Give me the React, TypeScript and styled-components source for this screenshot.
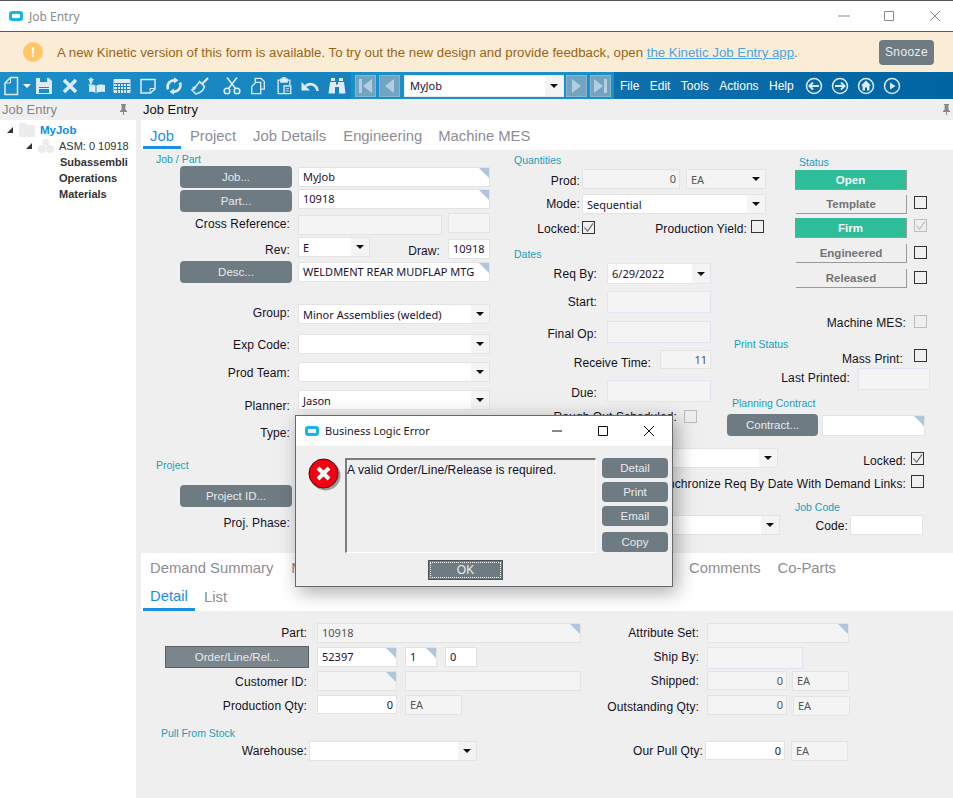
import React from "react";
import styled, { createGlobalStyle, css } from "styled-components";

const GlobalStyle = createGlobalStyle`
  html, body { margin: 0; padding: 0; background: #efefef; }
  * { box-sizing: border-box; }
`;

const UI = `"Liberation Sans", Arial, sans-serif`;
const VALUE = `"Noto Sans", "Open Sans", sans-serif`;
const SLATE = "#6f7b82";
const ICON = "#dcebf5";

type Place = { $mt?: number; $ml?: number };
const place = css<Place>`
  margin-top: ${(p) => p.$mt ?? 0}px;
  margin-left: ${(p) => p.$ml ?? 0}px;
`;

const Window = styled.div`
  width: 953px;
  height: 798px;
  display: flex;
  flex-direction: column;
  position: relative;
  overflow: hidden;
  background: #efefef;
  font-family: ${UI};
`;

const TitleBar = styled.header`
  height: 32px;
  flex: none;
  display: flex;
  align-items: center;
  padding-left: 9px;
  background: #fff;
  border-top: 1px solid #55565c;
  border-bottom: 1px solid #1b6fa8;
`;

const AppGlyph = styled.span`
  width: 14px;
  height: 10px;
  flex: none;
  display: flex;
  align-items: center;
  justify-content: center;
  background: #1ab6ea;
  border-radius: 3px;
  &::after {
    content: "";
    width: 8px;
    height: 4px;
    background: #fff;
    border-radius: 1px;
  }
`;

const AppTitle = styled.span`
  margin-left: 6px;
  font: 12px ${VALUE};
  color: #8b8b8b;
`;

const WinControls = styled.div`
  margin-left: auto;
  display: flex;
  align-items: center;
`;

const WinButton = styled.svg<{ $ml: number }>`
  width: 12px;
  height: 12px;
  margin-left: ${(p) => p.$ml}px;
  fill: none;
  stroke: currentColor;
  stroke-width: 1;
`;

const GreyControls = styled(WinControls)`
  color: #8a8a8a;
  padding-right: 12px;
`;

const Banner = styled.div`
  height: 40px;
  flex: none;
  display: flex;
  align-items: center;
  padding-left: 23px;
  background: #fbecd5;
  color: #9a6414;
  font-size: 13.25px;
`;

const WarnDot = styled.span`
  width: 20px;
  height: 20px;
  flex: none;
  border-radius: 50%;
  background: #fdc666;
  color: #fff;
  font: bold 14px/20px ${UI};
  text-align: center;
  margin-right: 14px;
`;

const BannerLink = styled.a`
  color: #4ba4e2;
  text-decoration: underline;
`;

const Snooze = styled.button`
  margin-left: auto;
  margin-right: 19px;
  width: 55px;
  height: 25px;
  border: 0;
  border-radius: 4px;
  background: ${SLATE};
  color: #e9eef1;
  font: 12px ${UI};
  letter-spacing: 0.4px;
  padding: 0;
`;

const Toolbar = styled.nav`
  height: 27px;
  flex: none;
  display: flex;
  align-items: center;
  color: ${ICON};
  background: linear-gradient(to right, #1b8ec8 0, #1683bf 340px, #0e6fad 620px, #0064a3 953px);
`;

const ToolSlot = styled.span<{ $w?: number; $ml?: number }>`
  width: ${(p) => p.$w ?? 26}px;
  margin-left: ${(p) => p.$ml ?? 0}px;
  flex: none;
  display: flex;
  align-items: center;
  justify-content: center;
`;

const ToolSvg = styled.svg<{ $solid?: boolean; $size?: number; $sw?: number }>`
  width: ${(p) => p.$size ?? 18}px;
  height: ${(p) => p.$size ?? 18}px;
  fill: ${(p) => (p.$solid ? ICON : "none")};
  stroke: ${(p) => (p.$solid ? "none" : ICON)};
  stroke-width: ${(p) => p.$sw ?? 1.5};
`;

const Caret = styled.span<{ $c?: string }>`
  width: 0;
  height: 0;
  border-left: 4px solid transparent;
  border-right: 4px solid transparent;
  border-top: 4px solid ${(p) => p.$c ?? "#fff"};
`;

const NavGroup = styled.div`
  height: 27px;
  margin-left: 1px;
  padding: 0 3px 0 4px;
  flex: none;
  display: flex;
  align-items: center;
  background: #1a90cb;
`;

const NavButton = styled.span<{ $ml?: number }>`
  width: 21px;
  height: 22px;
  margin-left: ${(p) => p.$ml ?? 0}px;
  flex: none;
  display: flex;
  align-items: center;
  justify-content: center;
  background: #70a4c1;
  border: 1px solid #86b6cf;
`;

const NavSvg = styled.svg`
  width: 15px;
  height: 16px;
  fill: #b5cedd;
`;

const RecordCombo = styled.div`
  width: 160px;
  height: 22px;
  margin: 0 2px 0 4px;
  display: flex;
  align-items: center;
  background: #fff;
  border: 1px solid #e8e8e8;
  font: 11px ${VALUE};
  color: #1a1030;
  padding-left: 5px;
`;

const RecordArrow = styled.span`
  margin-left: auto;
  width: 18px;
  height: 20px;
  display: flex;
  align-items: center;
  justify-content: center;
  background: #f4f4f4;
`;

const Menu = styled.div`
  display: flex;
  margin-left: 6px;
  gap: 10.4px;
  color: #fff;
  font-size: 12px;
`;

const CircleIcons = styled.div`
  display: flex;
  align-items: center;
  margin-left: 11px;
  gap: 8px;
`;

const CircleSvg = styled.svg`
  width: 18px;
  height: 18px;
  fill: none;
  stroke: ${ICON};
  stroke-width: 1.5;
`;

const Workspace = styled.div`
  flex: 1;
  display: flex;
  min-height: 0;
`;

const Sidebar = styled.aside`
  width: 136px;
  flex: none;
  display: flex;
  flex-direction: column;
  overflow: hidden;
`;

const PanelHead = styled.div<{ $dark?: boolean }>`
  height: 21px;
  flex: none;
  display: flex;
  align-items: center;
  justify-content: space-between;
  padding: 0 ${(p) => (p.$dark ? "2px 0 2px" : "8px 0 2px")};
  font-size: 13px;
  color: ${(p) => (p.$dark ? "#111" : "#858585")};
  background: #efefef;
`;

const PinSvg = styled.svg`
  width: 9px;
  height: 11px;
  fill: #888;
`;

const Tree = styled.div`
  flex: 1;
  background: #fff;
  padding: 2px 6px 0 0;
  overflow: hidden;
`;

const TreeRow = styled.div<{ $indent: number }>`
  height: 16px;
  display: flex;
  align-items: center;
  padding-left: ${(p) => p.$indent}px;
  white-space: nowrap;
  overflow: hidden;
`;

const Twist = styled.svg`
  width: 6px;
  height: 6px;
  flex: none;
  fill: #333;
  margin-right: 6px;
`;

const TreeIcon = styled.svg`
  width: 16px;
  height: 14px;
  flex: none;
  fill: #ececec;
  margin-right: 5px;
`;

const TreeText = styled.span<{ $root?: boolean; $bold?: boolean }>`
  font-size: ${(p) => (p.$root ? 11.5 : 11)}px;
  font-weight: ${(p) => (p.$root || p.$bold ? "bold" : "normal")};
  color: ${(p) => (p.$root ? "#0a8de6" : "#333")};
`;

const Main = styled.main`
  margin-left: 5px;
  flex: 1;
  min-width: 0;
  display: flex;
  flex-direction: column;
`;

const Tabs = styled.div`
  height: 30px;
  flex: none;
  display: flex;
  align-items: flex-start;
  background: #fff;
`;

const SubTabs = styled.div`
  height: 58px;
  flex: none;
  display: flex;
  flex-direction: column;
  background: #fff;
`;

const TabLine = styled.div`
  height: 29px;
  display: flex;
`;

const Tab = styled.span<{ $active?: boolean; $w?: number; $ml?: number; $pt?: number }>`
  height: 29px;
  flex: none;
  width: ${(p) => (p.$w ? `${p.$w}px` : "auto")};
  margin-left: ${(p) => p.$ml ?? 0}px;
  padding-top: ${(p) => p.$pt ?? 0}px;
  text-align: center;
  font-size: 14.8px;
  line-height: 26px;
  white-space: nowrap;
  color: ${(p) => (p.$active ? "#1a8fe3" : "#8d8d93")};
  border-bottom: 3px solid ${(p) => (p.$active ? "#1a8fe3" : "transparent")};
`;

const Form = styled.section`
  height: 403px;
  flex: none;
  display: flex;
`;

const LeftCol = styled.div`
  width: 364px;
  flex: none;
`;

const RightGrid = styled.div`
  flex: 1;
  display: grid;
  grid-template-columns: 220px 65px 1fr;
  grid-template-rows: 95px 90px 105px 1fr;
`;

const Quantities = styled.div`
  grid-column: 1 / 3;
  grid-row: 1;
`;

const Status = styled.div`
  grid-column: 3;
  grid-row: 1 / 3;
`;

const Dates = styled.div`
  grid-column: 1;
  grid-row: 2 / 4;
`;

const PrintAndContract = styled.div`
  grid-column: 2 / 4;
  grid-row: 3;
`;

const LinksAndCode = styled.div`
  grid-column: 1 / 4;
  grid-row: 4;
`;

const Row = styled.div<{ $mt: number; $h: number }>`
  margin-top: ${(p) => p.$mt}px;
  height: ${(p) => p.$h}px;
  display: flex;
  align-items: flex-start;
`;

const Caption = styled.div<Place>`
  ${place}
  height: 12px;
  font-size: 10.5px;
  line-height: 12px;
  color: #1a9dba;
`;

const Label = styled.span<Place & { $w: number }>`
  ${place}
  width: ${(p) => p.$w}px;
  flex: none;
  text-align: right;
  font-size: 12px;
  line-height: 16px;
  letter-spacing: 0.1px;
  color: #14101c;
  white-space: nowrap;
`;

const ActionButton = styled.button<Place & { $w: number; $square?: boolean }>`
  ${place}
  width: ${(p) => p.$w}px;
  height: 22px;
  flex: none;
  padding: 0;
  border: ${(p) => (p.$square ? "1px solid #5a6268" : "0")};
  border-radius: ${(p) => (p.$square ? 0 : 4)}px;
  background: ${(p) => (p.$square ? "#7b858c" : SLATE)};
  color: #e6ebee;
  font: 11.5px ${UI};
`;

const Field = styled.div<Place & { $w: number; $h?: number; $off?: boolean; $lav?: boolean; $right?: boolean; $corner?: boolean }>`
  ${place}
  width: ${(p) => p.$w}px;
  height: ${(p) => p.$h ?? 20}px;
  flex: none;
  position: relative;
  display: flex;
  align-items: center;
  justify-content: ${(p) => (p.$right ? "flex-end" : "flex-start")};
  padding: 0 ${(p) => (p.$right ? 3 : 4)}px 1px;
  background: ${(p) => (p.$off ? "#f4f4f4" : "#fff")};
  border: 1px solid ${(p) => (p.$lav ? "#e3e3f4" : "#e3e3e3")};
  font: 11px ${VALUE};
  color: ${(p) => (p.$off ? "#555" : "#1a1030")};
  white-space: nowrap;
  overflow: hidden;
  ${(p) =>
    p.$corner &&
    css`
      &::after {
        content: "";
        position: absolute;
        top: 0;
        right: 0;
        border-top: 10px solid #b0c4de;
        border-left: 10px solid transparent;
      }
    `}
`;

const ComboBox = styled(Field)`
  padding-right: 0;
  padding-bottom: 0;
`;

const ComboArrow = styled.span`
  margin-left: auto;
  width: 18px;
  height: 100%;
  flex: none;
  display: flex;
  align-items: center;
  justify-content: center;
  background: #f4f4f4;
`;

const Tick = styled.span<Place & { $off?: boolean }>`
  ${place}
  width: 13px;
  height: 13px;
  flex: none;
  display: flex;
  align-items: center;
  justify-content: center;
  border: 1px solid ${(p) => (p.$off ? "#bdbdbd" : "#333")};
  color: ${(p) => (p.$off ? "#bdbdbd" : "#666")};
`;

const TickSvg = styled.svg`
  width: 11px;
  height: 11px;
  fill: none;
  stroke: currentColor;
  stroke-width: 1.2;
`;

const StatusFlag = styled.div<Place & { $w: number; $on?: boolean }>`
  ${place}
  width: ${(p) => p.$w}px;
  height: ${(p) => (p.$on ? 20 : 19)}px;
  flex: none;
  text-align: center;
  font-size: 11.5px;
  font-weight: bold;
  line-height: ${(p) => (p.$on ? 20 : 18)}px;
  color: ${(p) => (p.$on ? "#f3fbf8" : "#737373")};
  background: ${(p) => (p.$on ? "#2fbd9a" : "transparent")};
  border-right: 1px solid #9a9a9a;
  border-bottom: 1px solid #9a9a9a;
`;

const Bottom = styled.section`
  flex: 1;
  display: flex;
`;

const BottomLeft = styled.div`
  width: 450px;
  flex: none;
`;

const BottomRight = styled.div`
  flex: 1;
`;

const Dialog = styled.div`
  position: absolute;
  left: 295px;
  top: 415px;
  width: 378px;
  height: 172px;
  display: flex;
  flex-direction: column;
  background: #efefef;
  border: 1px solid #66696c;
  box-shadow: 4px 5px 18px rgba(0, 0, 0, 0.35);
`;

const DialogBar = styled.div`
  height: 30px;
  flex: none;
  display: flex;
  align-items: center;
  padding: 0 0 1px 9px;
  background: #fff;
`;

const DialogTitle = styled.span`
  margin-left: 6px;
  font: 11px ${VALUE};
  color: #1a1a2a;
`;

const BlackControls = styled(WinControls)`
  color: #111;
  padding-right: 17px;
`;

const DialogBody = styled.div`
  margin-top: 12px;
  height: 96px;
  flex: none;
  display: flex;
  align-items: flex-start;
`;

const ErrorSvg = styled.svg`
  width: 34px;
  height: 34px;
  flex: none;
  margin: 0 3px 0 12px;
`;

const MessageBox = styled.div`
  width: 251px;
  height: 95px;
  flex: none;
  padding-top: 3px;
  border-top: 2px solid #7c7c7c;
  border-left: 2px solid #7c7c7c;
  border-right: 1px solid #fff;
  border-bottom: 1px solid #fff;
  font-size: 12px;
  color: #12102a;
  letter-spacing: 0.1px;
`;

const DialogActions = styled.div`
  margin-left: 6px;
  display: flex;
  flex-direction: column;
  align-items: stretch;
`;

const DialogButton = styled.button<{ $mt?: number }>`
  width: 66px;
  height: 20px;
  margin-top: ${(p) => p.$mt ?? 0}px;
  padding: 0;
  border: 0;
  border-radius: 4px;
  background: ${SLATE};
  color: #e6ebee;
  font: 11.5px ${UI};
`;

const OkRow = styled.div`
  margin-top: 6px;
  padding-left: 132px;
`;

const OkButton = styled.button`
  width: 75px;
  height: 20px;
  padding: 0;
  border: 1px solid #4f555a;
  background: ${SLATE};
  color: #e6ebee;
  font: 12px ${UI};
  outline: 1px dotted #fff;
  outline-offset: -3px;
`;

const Check = () => (
  <TickSvg viewBox="0 0 12 12">
    <path d="M1.5 6 L5 10 L11 1.5" />
  </TickSvg>
);

const Combo = ({ value, ...rest }: { value?: string } & React.ComponentProps<typeof ComboBox>) => (
  <ComboBox {...rest}>
    {value}
    <ComboArrow>
      <Caret $c="#111" />
    </ComboArrow>
  </ComboBox>
);

const Pin = () => (
  <PinSvg viewBox="0 0 9 11">
    <path d="M2 0h5v1H6.4v4.5L8 7v1H5v3H4V8H1V7l1.6-1.5V1H2z" />
  </PinSvg>
);

function ToolIcons() {
  return (
    <>
      <ToolSlot $w={22}>
        <ToolSvg $size={20} viewBox="0 0 20 20">
          <path d="M4 18.5V7l5.5-5.5H16.5V18.5Z" />
          <path d="M4 7h5.5V1.5" strokeWidth="1" />
        </ToolSvg>
      </ToolSlot>
      <ToolSlot $w={9}>
        <Caret />
      </ToolSlot>
      <ToolSlot>
        <ToolSvg $solid viewBox="0 0 18 18">
          <path d="M1 1h13l3 3v13H1zM5 1v4h7V1zM4 10v6h10v-6z" fillRule="evenodd" />
          <path d="M4 11h10v1H4z" />
        </ToolSvg>
      </ToolSlot>
      <ToolSlot>
        <ToolSvg $sw={3.6} viewBox="0 0 18 18">
          <path d="M3 3l12 12M15 3L3 15" />
        </ToolSvg>
      </ToolSlot>
      <ToolSlot>
        <ToolSvg $solid viewBox="0 0 18 18">
          <path d="M0 8h2v7c3-.4 5-.2 6.5 1V8.5C7 7.6 5 7.4 3 7.6V5h1.8v2H3zM18 8v7c-3-.4-6-.2-8.5 1V8.5c1.5-1 5-1.3 7.5-.5z" />
          <path d="M4 0l1 1.8 2 .3-1.5 1.3L6 5.4 4 4.4 2 5.4l.5-2L1 2.1l2-.3z" />
        </ToolSvg>
      </ToolSlot>
      <ToolSlot>
        <ToolSvg $sw={1} viewBox="0 0 18 16">
          <path d="M1 1.5h16v13H1z" fill={ICON} />
          <path d="M1 5.5h16M1 8.5h16M1 11.5h16M4.5 5v10M7.5 5v10M10.5 5v10M13.5 5v10" stroke="#1789c2" />
        </ToolSvg>
      </ToolSlot>
      <ToolSlot>
        <ToolSvg viewBox="0 0 18 18">
          <path d="M2 2.5h14V12l-4.5 4H2z" />
          <path d="M16 11.5h-5V16" strokeWidth="1" />
        </ToolSvg>
      </ToolSlot>
      <ToolSlot>
        <ToolSvg $sw={2.6} viewBox="0 0 18 18">
          <path d="M3 12.5C1.5 8 4 3.5 9.5 3.3" />
          <path d="M15 5.5c1.5 4.5-1 9-6.5 9.2" />
          <path d="M9 .3l4.5 3L9 6.5zM9 11.5l-4.5 3.2L9 17.7z" fill={ICON} stroke="none" />
        </ToolSvg>
      </ToolSlot>
      <ToolSlot>
        <ToolSvg $size={20} viewBox="0 0 20 20">
          <path d="M12 8L18 2" strokeWidth="2.2" />
          <path d="M9.5 5.5l5 5c-1 3.5-4.5 6.5-8.5 7.5L2 14c1.8-.3 3-1.3 3.5-2.5-1 .5-2 .7-3 .6 3-1.2 5.5-3.6 7-6.6z" />
        </ToolSvg>
      </ToolSlot>
      <ToolSlot $ml={6}>
        <ToolSvg $size={20} $sw={1.6} viewBox="0 0 20 20">
          <circle cx="5" cy="15" r="2.8" />
          <circle cx="15" cy="15" r="2.8" />
          <path d="M6.5 12.5L15 1.5M13.5 12.5L5 1.5" />
        </ToolSvg>
      </ToolSlot>
      <ToolSlot>
        <ToolSvg viewBox="0 0 18 20">
          <path d="M6 5.5V1.5h6.5l3.5 3.5V13.5h-4" />
          <path d="M2 10.5L6.5 6H12V18.5H2z" />
        </ToolSvg>
      </ToolSlot>
      <ToolSlot>
        <ToolSvg viewBox="0 0 18 20">
          <path d="M6 3.5H2.5V18.5H8.5" />
          <path d="M12 3.5h3.5V9" />
          <path d="M5.5 5.5v-3h1.5a2 2 0 0 1 4 0h1.5v3z" fill={ICON} />
          <path d="M9 10h7.5v8.5H9z" />
          <path d="M11 13h3.5M11 15.5h3.5" strokeWidth="1" />
        </ToolSvg>
      </ToolSlot>
      <ToolSlot>
        <ToolSvg $sw={2.6} $size={20} viewBox="0 0 20 20">
          <path d="M17.5 15C17 9 10.5 6 5.5 10" />
          <path d="M1.5 6v8.5H10z" fill={ICON} stroke="none" />
        </ToolSvg>
      </ToolSlot>
      <ToolSlot $ml={1}>
        <ToolSvg $solid viewBox="0 0 18 18">
          <path d="M3 1h4v3H3zM11 1h4v3h-4zM2 5h6v2.5h2V5h6l1.5 11.5h-6.500V10H7v6.500H.5z" />
        </ToolSvg>
      </ToolSlot>
    </>
  );
}

export default function App() {
  return (
    <>
      <GlobalStyle />
      <Window>
        <TitleBar>
          <AppGlyph />
          <AppTitle>Job Entry</AppTitle>
          <GreyControls>
            <WinButton $ml={0} viewBox="0 0 12 12">
              <path d="M0 6h12" />
            </WinButton>
            <WinButton $ml={33} viewBox="0 0 12 12">
              <path d="M1.5 1.5h9v9h-9z" />
            </WinButton>
            <WinButton $ml={34} viewBox="0 0 12 12">
              <path d="M1 1l10 10M11 1L1 11" />
            </WinButton>
          </GreyControls>
        </TitleBar>

        <Banner>
          <WarnDot>!</WarnDot>
          <span>
            A new Kinetic version of this form is available. To try out the new design and provide feedback, open{" "}
            <BannerLink>the Kinetic Job Entry app</BannerLink>.
          </span>
          <Snooze>Snooze</Snooze>
        </Banner>

        <Toolbar>
          <ToolIcons />
          <NavGroup>
            <NavButton>
              <NavSvg viewBox="0 0 15 16">
                <path d="M1 1h3v14H1zM14 1v14L5 8z" />
              </NavSvg>
            </NavButton>
            <NavButton $ml={3}>
              <NavSvg viewBox="0 0 15 16">
                <path d="M12 1v14L3 8z" />
              </NavSvg>
            </NavButton>
            <RecordCombo>
              MyJob
              <RecordArrow>
                <Caret $c="#111" />
              </RecordArrow>
            </RecordCombo>
            <NavButton>
              <NavSvg viewBox="0 0 15 16">
                <path d="M3 1v14l9-7z" />
              </NavSvg>
            </NavButton>
            <NavButton $ml={3}>
              <NavSvg viewBox="0 0 15 16">
                <path d="M1 1v14l9-7zM11 1h3v14h-3z" />
              </NavSvg>
            </NavButton>
          </NavGroup>
          <Menu>
            <span>File</span>
            <span>Edit</span>
            <span>Tools</span>
            <span>Actions</span>
            <span>Help</span>
          </Menu>
          <CircleIcons>
            <CircleSvg viewBox="0 0 18 18">
              <circle cx="9" cy="9" r="7.5" />
              <path d="M14 9H5M8 5.5L4.5 9 8 12.5" strokeWidth="2" />
            </CircleSvg>
            <CircleSvg viewBox="0 0 18 18">
              <circle cx="9" cy="9" r="7.5" />
              <path d="M4 9h9M10 5.5L13.5 9 10 12.5" strokeWidth="2" />
            </CircleSvg>
            <CircleSvg viewBox="0 0 18 18">
              <circle cx="9" cy="9" r="7.5" />
              <path d="M9 3.5L14 8.5H12.5V13.5H10V10.5H8V13.5H5.5V8.5H4z" fill={ICON} stroke="none" />
            </CircleSvg>
            <CircleSvg viewBox="0 0 18 18">
              <circle cx="9" cy="9" r="7.5" />
              <path d="M7 5.5l5.5 3.5L7 12.5z" fill={ICON} stroke="none" />
            </CircleSvg>
          </CircleIcons>
        </Toolbar>

        <Workspace>
          <Sidebar>
            <PanelHead>
              Job Entry
              <Pin />
            </PanelHead>
            <Tree>
              <TreeRow $indent={7}>
                <Twist viewBox="0 0 6 6">
                  <path d="M6 0v6H0z" />
                </Twist>
                <TreeIcon viewBox="0 0 16 14">
                  <path d="M0 0h7l1 2h8v12H0z" />
                </TreeIcon>
                <TreeText $root>MyJob</TreeText>
              </TreeRow>
              <TreeRow $indent={26}>
                <Twist viewBox="0 0 6 6">
                  <path d="M6 0v6H0z" />
                </Twist>
                <TreeIcon viewBox="0 0 16 14">
                  <circle cx="8" cy="3.5" r="3.5" />
                  <circle cx="4" cy="10" r="4" />
                  <circle cx="12" cy="10" r="4" />
                </TreeIcon>
                <TreeText>ASM: 0 10918</TreeText>
              </TreeRow>
              <TreeRow $indent={60}>
                <TreeText $bold>Subassembli</TreeText>
              </TreeRow>
              <TreeRow $indent={59}>
                <TreeText $bold>Operations</TreeText>
              </TreeRow>
              <TreeRow $indent={59}>
                <TreeText $bold>Materials</TreeText>
              </TreeRow>
            </Tree>
          </Sidebar>

          <Main>
            <PanelHead $dark>
              <span>Job Entry</span>
              <Pin />
            </PanelHead>
            <Tabs>
              <Tab $active $pt={3} $w={38} $ml={2}>Job</Tab>
              <Tab $pt={3} $ml={9}>Project</Tab>
              <Tab $pt={3} $ml={17}>Job Details</Tab>
              <Tab $pt={3} $ml={17}>Engineering</Tab>
              <Tab $pt={3} $ml={16}>Machine MES</Tab>
            </Tabs>

            <Form>
              <LeftCol>
                <Caption $mt={3} $ml={15}>Job / Part</Caption>
                <Row $mt={1} $h={22}>
                  <ActionButton $ml={39} $w={112}>Job...</ActionButton>
                  <Field $ml={6} $mt={1} $w={192} $corner>MyJob</Field>
                </Row>
                <Row $mt={1} $h={23}>
                  <ActionButton $ml={39} $mt={1} $w={112}>Part...</ActionButton>
                  <Field $ml={6} $w={192} $corner>10918</Field>
                </Row>
                <Row $mt={1} $h={22}>
                  <Label $mt={3} $w={149}>Cross Reference:</Label>
                  <Field $off $ml={8} $mt={2} $w={144} />
                  <Field $off $ml={6} $w={42} />
                </Row>
                <Row $mt={2} $h={22}>
                  <Label $mt={5} $w={149}>Rev:</Label>
                  <Combo $ml={8} $w={72} value="E" />
                  <Label $mt={6} $w={70}>Draw:</Label>
                  <Field $ml={8} $mt={2} $w={42}>10918</Field>
                </Row>
                <Row $mt={2} $h={22}>
                  <ActionButton $ml={39} $w={112}>Desc...</ActionButton>
                  <Field $ml={6} $mt={1} $w={192} $corner>WELDMENT REAR MUDFLAP MTG</Field>
                </Row>
                <Row $mt={21} $h={20}>
                  <Label $mt={1} $w={149}>Group:</Label>
                  <Combo $ml={8} $w={192} value="Minor Assemblies (welded)" />
                </Row>
                <Row $mt={10} $h={20}>
                  <Label $mt={3} $w={149}>Exp Code:</Label>
                  <Combo $ml={8} $w={192} />
                </Row>
                <Row $mt={8} $h={20}>
                  <Label $mt={3} $w={149}>Prod Team:</Label>
                  <Combo $ml={8} $w={192} />
                </Row>
                <Row $mt={8} $h={20}>
                  <Label $mt={8} $w={149}>Planner:</Label>
                  <Combo $ml={8} $w={192} value="Jason" />
                </Row>
                <Row $mt={12} $h={20}>
                  <Label $mt={3} $w={149}>Type:</Label>
                  <Combo $ml={8} $w={192} />
                </Row>
                <Caption $mt={17} $ml={15}>Project</Caption>
                <Row $mt={14} $h={22}>
                  <ActionButton $ml={39} $w={112}>Project ID...</ActionButton>
                </Row>
                <Row $mt={5} $h={20}>
                  <Label $mt={3} $w={149}>Proj. Phase:</Label>
                </Row>
              </LeftCol>

              <RightGrid>
                <Quantities>
                  <Caption $mt={4} $ml={9}>Quantities</Caption>
                  <Row $mt={3} $h={20}>
                    <Label $mt={4} $w={75}>Prod:</Label>
                    <Field $off $right $ml={2} $w={98}>0</Field>
                    <Combo $off $ml={6} $w={80} value="EA" />
                  </Row>
                  <Row $mt={5} $h={20}>
                    <Label $mt={2} $w={75}>Mode:</Label>
                    <Combo $ml={2} $w={184} value="Sequential" />
                  </Row>
                  <Row $mt={6} $h={14}>
                    <Label $mt={1} $w={75}>Locked:</Label>
                    <Tick $ml={2} $mt={1}><Check /></Tick>
                    <Label $mt={1} $w={152}>Production Yield:</Label>
                    <Tick $ml={4} />
                  </Row>
                </Quantities>

                <Status>
                  <Caption $mt={6} $ml={9}>Status</Caption>
                  <Row $mt={2} $h={20}>
                    <StatusFlag $on $ml={5} $w={112}>Open</StatusFlag>
                  </Row>
                  <Row $mt={5} $h={19}>
                    <StatusFlag $ml={6} $w={111}>Template</StatusFlag>
                    <Tick $ml={7} $mt={1} />
                  </Row>
                  <Row $mt={4} $h={20}>
                    <StatusFlag $on $ml={5} $w={112}>Firm</StatusFlag>
                    <Tick $ml={7} $mt={1} $off><Check /></Tick>
                  </Row>
                  <Row $mt={6} $h={19}>
                    <StatusFlag $ml={6} $w={111}>Engineered</StatusFlag>
                    <Tick $ml={7} $mt={2} />
                  </Row>
                  <Row $mt={6} $h={19}>
                    <StatusFlag $ml={6} $w={111}>Released</StatusFlag>
                    <Tick $ml={7} $mt={2} />
                  </Row>
                  <Row $mt={27} $h={13}>
                    <Label $w={116}>Machine MES:</Label>
                    <Tick $ml={8} $off />
                  </Row>
                </Status>

                <Dates>
                  <Caption $mt={3} $ml={9}>Dates</Caption>
                  <Row $mt={3} $h={21}>
                    <Label $mt={3} $w={92}>Req By:</Label>
                    <Combo $lav $ml={10} $w={104} $h={21} value="6/29/2022" />
                  </Row>
                  <Row $mt={7} $h={22}>
                    <Label $mt={3} $w={92}>Start:</Label>
                    <Field $off $lav $ml={10} $w={104} $h={22} />
                  </Row>
                  <Row $mt={8} $h={22}>
                    <Label $mt={5} $w={92}>Final Op:</Label>
                    <Field $off $lav $ml={10} $w={104} $h={22} />
                  </Row>
                  <Row $mt={7} $h={19}>
                    <Label $mt={5} $w={146}>Receive Time:</Label>
                    <Field $off $right $ml={9} $w={51} $h={19}>11</Field>
                  </Row>
                  <Row $mt={11} $h={22}>
                    <Label $mt={5} $w={92}>Due:</Label>
                    <Field $off $lav $ml={10} $w={104} $h={22} />
                  </Row>
                  <Row $mt={8} $h={13}>
                    <Label $mt={-1} $w={172}>Rough Out Scheduled:</Label>
                    <Tick $ml={7} $off />
                  </Row>
                </Dates>

                <PrintAndContract>
                  <Caption $mt={3} $ml={9}>Print Status</Caption>
                  <Row $mt={-1} $h={13}>
                    <Label $mt={2} $w={178}>Mass Print:</Label>
                    <Tick $ml={11} />
                  </Row>
                  <Row $mt={6} $h={22}>
                    <Label $mt={2} $w={125}>Last Printed:</Label>
                    <Field $off $lav $ml={8} $w={72} $h={22} />
                  </Row>
                  <Caption $mt={7} $ml={7}>Planning Contract</Caption>
                  <Row $mt={5} $h={22}>
                    <ActionButton $ml={2} $w={91}>Contract...</ActionButton>
                    <Field $ml={4} $mt={1} $w={103} $h={21} $corner />
                  </Row>
                </PrintAndContract>

                <LinksAndCode>
                  <Row $mt={8} $h={20}>
                    <Combo $ml={135} $w={138} />
                    <Label $mt={5} $w={128}>Locked:</Label>
                    <Tick $ml={5} $mt={4}><Check /></Tick>
                  </Row>
                  <Row $mt={7} $h={13}>
                    <Label $mt={1} $w={401}>Synchronize Req By Date With Demand Links:</Label>
                    <Tick $ml={5} />
                  </Row>
                  <Caption $mt={13} $ml={290}>Job Code</Caption>
                  <Row $mt={2} $h={20}>
                    <Combo $ml={135} $w={140} />
                    <Label $mt={3} $w={68}>Code:</Label>
                    <Field $ml={2} $w={73} />
                  </Row>
                </LinksAndCode>
              </RightGrid>
            </Form>

            <SubTabs>
              <TabLine>
                <Tab $pt={2} $ml={9}>Demand Summary</Tab>
                <Tab $pt={2} $ml={18}>Material</Tab>
                <Tab $pt={2} $ml={345}>Comments</Tab>
                <Tab $pt={2} $ml={17}>Co-Parts</Tab>
              </TabLine>
              <TabLine>
                <Tab $active $pt={1} $ml={2} $w={52}>Detail</Tab>
                <Tab $pt={2} $ml={9}>List</Tab>
              </TabLine>
            </SubTabs>

            <Bottom>
              <BottomLeft>
                <Row $mt={12} $h={20}>
                  <Label $mt={2} $w={166}>Part:</Label>
                  <Field $off $ml={10} $w={264} $corner>10918</Field>
                </Row>
                <Row $mt={3} $h={22}>
                  <ActionButton $square $ml={24} $w={144}>Order/Line/Rel...</ActionButton>
                  <Field $ml={8} $mt={1} $w={80} $corner>52397</Field>
                  <Field $ml={8} $mt={1} $w={32} $corner>1</Field>
                  <Field $ml={8} $mt={1} $w={32}>0</Field>
                </Row>
                <Row $mt={3} $h={20}>
                  <Label $mt={3} $w={166}>Customer ID:</Label>
                  <Field $off $ml={10} $w={80} $corner />
                  <Field $off $ml={8} $w={176} />
                </Row>
                <Row $mt={4} $h={20}>
                  <Label $mt={3} $w={166}>Production Qty:</Label>
                  <Field $right $ml={10} $w={80} $h={19}>0</Field>
                  <Field $off $ml={8} $w={57}>EA</Field>
                </Row>
                <Caption $mt={12} $ml={20}>Pull From Stock</Caption>
                <Row $mt={2} $h={20}>
                  <Label $mt={2} $w={166}>Warehouse:</Label>
                  <Combo $ml={2} $w={168} />
                </Row>
              </BottomLeft>
              <BottomRight>
                <Row $mt={12} $h={20}>
                  <Label $mt={2} $w={108}>Attribute Set:</Label>
                  <Field $off $ml={8} $w={142} $corner />
                </Row>
                <Row $mt={4} $h={22}>
                  <Label $mt={2} $w={108}>Ship By:</Label>
                  <Field $off $lav $ml={8} $w={96} $h={22} />
                </Row>
                <Row $mt={2} $h={20}>
                  <Label $mt={2} $w={108}>Shipped:</Label>
                  <Field $off $right $ml={8} $w={80} $h={19}>0</Field>
                  <Field $off $ml={5} $w={57}>EA</Field>
                </Row>
                <Row $mt={4} $h={21}>
                  <Label $mt={4} $w={108}>Outstanding Qty:</Label>
                  <Field $off $right $ml={8} $w={80}>0</Field>
                  <Field $off $ml={6} $mt={1} $w={57}>EA</Field>
                </Row>
                <Row $mt={25} $h={20}>
                  <Label $mt={2} $w={112}>Our Pull Qty:</Label>
                  <Field $right $ml={2} $w={80} $h={19}>0</Field>
                  <Field $off $ml={6} $w={57}>EA</Field>
                </Row>
              </BottomRight>
            </Bottom>
          </Main>
        </Workspace>

        <Dialog>
          <DialogBar>
            <AppGlyph />
            <DialogTitle>Business Logic Error</DialogTitle>
            <BlackControls>
              <WinButton $ml={0} viewBox="0 0 12 12">
                <path d="M1 6h10" />
              </WinButton>
              <WinButton $ml={34} viewBox="0 0 12 12">
                <path d="M1.5 1.5h9v9h-9z" />
              </WinButton>
              <WinButton $ml={34} viewBox="0 0 12 12">
                <path d="M1 1l10 10M11 1L1 11" />
              </WinButton>
            </BlackControls>
          </DialogBar>
          <DialogBody>
            <ErrorSvg viewBox="0 0 34 34">
              <circle cx="17.5" cy="17.5" r="15" fill="#9a9a9a" />
              <circle cx="15.5" cy="15.5" r="14.5" fill="#f00012" stroke="#4a0a0a" strokeWidth="1" />
              <path d="M10 10l11 11M21 10L10 21" stroke="#fff" strokeWidth="4" />
            </ErrorSvg>
            <MessageBox>A valid Order/Line/Release is required.</MessageBox>
            <DialogActions>
              <DialogButton>Detail</DialogButton>
              <DialogButton $mt={4}>Print</DialogButton>
              <DialogButton $mt={4}>Email</DialogButton>
              <DialogButton $mt={6}>Copy</DialogButton>
            </DialogActions>
          </DialogBody>
          <OkRow>
            <OkButton>OK</OkButton>
          </OkRow>
        </Dialog>
      </Window>
    </>
  );
}
